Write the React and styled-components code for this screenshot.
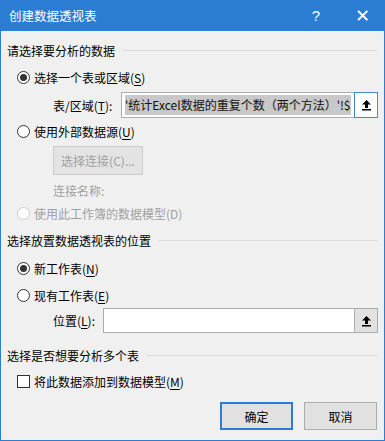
import React from "react";
import styled, { createGlobalStyle } from "styled-components";

const Global = createGlobalStyle`
  html, body { margin: 0; padding: 0; background: #f0f0f0; }
  body { font-family: "Noto Sans CJK SC", "Microsoft YaHei", sans-serif; font-size: 12px; color: #000; }
`;

const Window = styled.div`
  width: 385px;
  height: 441px;
  box-sizing: border-box;
  border: 1px solid #2b7cd3;
  border-top: none;
  background: #f0f0f0;
  display: flex;
  flex-direction: column;
  overflow: hidden;
`;

const TitleBar = styled.div`
  height: 31px;
  background: #2b7cd3;
  color: #fff;
  display: flex;
  align-items: center;
  padding-left: 9px;
  margin: 0 -1px;
  font-size: 12.5px;
`;

const TitleText = styled.div`
  flex: 1;
`;

const TitleBtn = styled.div`
  width: 46px;
  text-align: center;
  font-size: ${(p) => p.$size || 15}px;
  font-family: "Liberation Sans", sans-serif;
`;

const Body = styled.div`
  display: flex;
  flex-direction: column;
  padding: 0 6px 0 6px;
`;

const Section = styled.div`
  display: flex;
  align-items: center;
  height: 20px;
  margin-top: ${(p) => p.$mt}px;
  gap: 8px;
  &::after {
    content: "";
    flex: 1;
    height: 1px;
    background: #dcdcdc;
    margin-right: 1px;
  }
`;

const Row = styled.div`
  display: flex;
  align-items: center;
  height: ${(p) => p.$h || 20}px;
  margin-top: ${(p) => p.$mt}px;
  padding-left: ${(p) => p.$pl || 0}px;
  color: ${(p) => (p.$disabled ? "#a0a0a0" : "#000")};
`;

const Radio = styled.span`
  width: 13px;
  height: 13px;
  box-sizing: border-box;
  border-radius: 50%;
  border: 1px solid ${(p) => (p.$disabled ? "#cccccc" : "#333")};
  background: #fff;
  margin-left: 10px;
  margin-right: 4px;
  display: flex;
  align-items: center;
  justify-content: center;
  &::after {
    content: "";
    width: 7px;
    height: 7px;
    border-radius: 50%;
    background: ${(p) => (p.$checked ? "#333" : "transparent")};
  }
`;

const Check = styled.span`
  width: 13px;
  height: 13px;
  box-sizing: border-box;
  border: 1px solid #333;
  background: #fff;
  margin-left: 10px;
  margin-right: 4px;
`;

const U = styled.u`
  text-underline-offset: 2px;
`;

const FieldLabel = styled.span`
  width: ${(p) => p.$w}px;
  flex: none;
`;

const Input = styled.div`
  flex: 1;
  height: 100%;
  box-sizing: border-box;
  border: 1px solid #adadad;
  border-right: none;
  background: #fff;
  display: flex;
  align-items: center;
  padding-left: 3px;
  overflow: hidden;
  white-space: nowrap;
`;

const Selected = styled.span`
  background: #c8c8c8;
  color: #111;
  padding: 2px 0;
  line-height: 16px;
`;

const PickBtn = styled.div`
  width: 24px;
  height: 100%;
  box-sizing: border-box;
  border: 1px solid ${(p) => (p.$focus ? "#3c8ad8" : "#adadad")};
  background: ${(p) => (p.$focus ? "#fff" : "#e1e1e1")};
  display: flex;
  align-items: center;
  justify-content: center;
  flex: none;
`;

const GrayButton = styled.div`
  width: 90px;
  height: 29px;
  box-sizing: border-box;
  border: 1px solid #cccccc;
  background: #e3e3e3;
  color: #a0a0a0;
  display: flex;
  align-items: center;
  justify-content: center;
`;

const Footer = styled.div`
  display: flex;
  justify-content: flex-end;
  gap: 11px;
  margin-top: 11px;
  padding-right: 1px;
`;

const DlgButton = styled.div`
  width: 73px;
  height: 28px;
  box-sizing: border-box;
  border: ${(p) => (p.$primary ? "2px solid #2b7cd3" : "1px solid #adadad")};
  background: #e1e1e1;
  display: flex;
  align-items: center;
  justify-content: center;
`;

const UpIcon = () => (
  <svg width="11" height="12" viewBox="0 0 11 12">
    <path d="M5.5 1 L10 5.5 H7 V9 H4 V5.5 H1 Z" fill="#000" />
    <rect x="1" y="10" width="9" height="1.5" fill="#000" />
  </svg>
);

export default function App() {
  return (
    <>
      <Global />
      <Window>
        <TitleBar>
          <TitleText>创建数据透视表</TitleText>
          <TitleBtn $size={15}>?</TitleBtn>
          <TitleBtn $size={18}>✕</TitleBtn>
        </TitleBar>
        <Body>
          <Section $mt={9}>请选择要分析的数据</Section>
          <Row $mt={7}>
            <Radio $checked />
            选择一个表或区域(<U>S</U>)
          </Row>
          <Row $mt={5} $h={26} $pl={46}>
            <FieldLabel $w={68}>
              表/区域(<U>T</U>):
            </FieldLabel>
            <Input>
              <Selected>'统计Excel数据的重复个数（两个方法）'!$</Selected>
            </Input>
            <PickBtn $focus>
              <UpIcon />
            </PickBtn>
          </Row>
          <Row $mt={3}>
            <Radio />
            使用外部数据源(<U>U</U>)
          </Row>
          <Row $mt={5} $h={29} $pl={46}>
            <GrayButton>选择连接(C)...</GrayButton>
          </Row>
          <Row $mt={5} $pl={46} $disabled>
            连接名称:
          </Row>
          <Row $mt={3} $disabled>
            <Radio $disabled />
            使用此工作簿的数据模型(D)
          </Row>
          <Section $mt={7}>选择放置数据透视表的位置</Section>
          <Row $mt={8}>
            <Radio $checked />
            新工作表(<U>N</U>)
          </Row>
          <Row $mt={7}>
            <Radio />
            现有工作表(<U>E</U>)
          </Row>
          <Row $mt={3} $h={25} $pl={46}>
            <FieldLabel $w={50}>
              位置(<U>L</U>):
            </FieldLabel>
            <Input />
            <PickBtn>
              <UpIcon />
            </PickBtn>
          </Row>
          <Section $mt={12}>选择是否想要分析多个表</Section>
          <Row $mt={6}>
            <Check />
            将此数据添加到数据模型(<U>M</U>)
          </Row>
          <Footer>
            <DlgButton $primary>确定</DlgButton>
            <DlgButton>取消</DlgButton>
          </Footer>
        </Body>
      </Window>
    </>
  );
}
